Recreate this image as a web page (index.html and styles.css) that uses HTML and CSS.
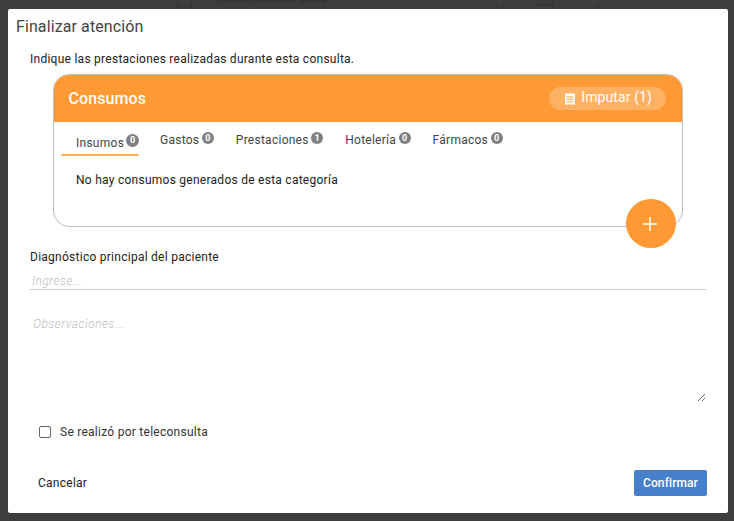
FILE: index.html
```html
<!DOCTYPE html>
<html lang="es">
<head>
  <meta charset="UTF-8">
  <title>Finalizar atención</title>
  <link rel="stylesheet" href="styles.css">
</head>
<body>
  <div class="backdrop-strip">
    <span class="backdrop-box"></span>
    <span class="backdrop-date">Lunes, 8 Junio 2020</span>
    <svg class="backdrop-nav" width="100" height="9" viewBox="0 0 100 9">
      <path d="M0 0l5 4M94 4l5-4" stroke="#4f4f4f" stroke-width="1" fill="none"/>
      <path d="M40.500-2v7h15v-7" stroke="#333" stroke-width="1" fill="none"/>
    </svg>
  </div>

  <div class="modal">
    <h2 class="modal-title">Finalizar atención</h2>
    <p class="modal-intro">Indique las prestaciones realizadas durante esta consulta.</p>

    <div class="card">
      <div class="card-head">
        <span class="card-title">Consumos</span>
        <button class="impute-btn">
          <svg class="impute-icon" width="10" height="12" viewBox="0 0 10 12">
            <path d="M0 0l1.250 1 1.250-1 1.250 1 1.250-1 1.250 1 1.250-1 1.250 1 1.250-1v12l-1.250-1-1.250 1-1.250-1-1.250 1-1.250-1-1.250 1-1.250-1-1.250 1z" fill="#fff"/>
            <path d="M1.500 3h7v1.500h-7zM1.500 5.500h7v1.500h-7zM1.500 8h7v1.500h-7z" fill="#ffb163" fill-opacity=".75"/>
          </svg>
          Imputar (1)
        </button>
      </div>

      <div class="tabs">
        <div class="tab tab-active">Insumos<span class="badge">0</span></div>
        <div class="tab">Gastos<span class="badge">0</span></div>
        <div class="tab">Prestaciones<span class="badge">1</span></div>
        <div class="tab">Hotelería<span class="badge">0</span></div>
        <div class="tab">Fármacos<span class="badge">0</span></div>
      </div>

      <p class="empty-msg">No hay consumos generados de esta categoría</p>

      <button class="fab">
        <svg width="14" height="14" viewBox="0 0 14 14">
          <path d="M7 0v14M0 7h14" stroke="#fff" stroke-width="1.4"/>
        </svg>
      </button>
    </div>

    <label class="field-label">Diagnóstico principal del paciente</label>
    <input class="field-input" type="text" placeholder="Ingrese...">
    <textarea class="field-notes" placeholder="Observaciones..."></textarea>

    <label class="check-row">
      <span class="check-box"></span>
      Se realizó por teleconsulta
    </label>

    <div class="modal-foot">
      <button class="btn-cancel">Cancelar</button>
      <button class="btn-confirm">Confirmar</button>
    </div>
  </div>
</body>
</html>
```

FILE: styles.css
```css
* {
  box-sizing: border-box;
}
html, body {
  height: 100%;
}
body {
  margin: 0;
  overflow: hidden;
  background-color: #3d3d3d;
  font-family: Roboto, "Liberation Sans", sans-serif;
  font-size: 12px;
  letter-spacing: .26px;
  color: #222;
}
button {
  font-family: inherit;
  letter-spacing: inherit;
  border: none;
  cursor: pointer;
}
.backdrop-strip {
  display: flex;
  align-items: flex-start;
  height: 9px;
  overflow: hidden;
  padding-left: 177px;
}
.backdrop-box {
  width: 15px;
  height: 7px;
  border: 1px solid #333;
  border-top: none;
}
.backdrop-date {
  width: 106px;
  margin: -9px 0 0 25px;
  font-size: 12px;
  line-height: 15px;
  letter-spacing: .2px;
  white-space: nowrap;
  color: #303030;
}
.backdrop-nav {
  margin-left: 174px;
  flex-shrink: 0;
}
.modal {
  width: 720px;
  height: 504px;
  margin-left: 8px;
  padding-top: 8px;
  background-color: #fff;
  border-radius: 2px;
}
.modal-title {
  margin: 0 0 0 8px;
  font-size: 16px;
  font-weight: 400;
  line-height: 19px;
  letter-spacing: .1px;
  color: #444;
}
.modal-intro {
  margin: 16px 0 0 22px;
  line-height: 14px;
}
.card {
  position: relative;
  width: 630px;
  height: 153px;
  margin: 8px 0 0 45px;
  border: 1px solid #bdbdbd;
  border-radius: 16px;
}
.card-head {
  display: flex;
  justify-content: space-between;
  align-items: center;
  height: 47px;
  padding: 0 16px 0 14.500px;
  background-color: #ff9933;
  border-radius: 15px 15px 0 0;
}
.card-title {
  font-size: 16px;
  font-weight: 500;
  letter-spacing: .1px;
  color: #fff;
}
.impute-btn {
  display: flex;
  align-items: center;
  gap: 6px;
  height: 23px;
  padding: 0 14px 3px 16px;
  background-color: #ffb163;
  border-radius: 12px;
  font-size: 14px;
  letter-spacing: .1px;
  color: #fff;
}
.impute-icon {
  margin-top: 4px;
}
.tabs {
  display: flex;
  gap: 22px;
  height: 34px;
  padding-left: 7px;
}
.tab {
  display: flex;
  align-items: flex-start;
  padding-top: 11px;
  line-height: 14px;
  color: #444;
}
.tab-active {
  width: 78px;
  height: 34px;
  margin-right: -1px;
  padding: 14px 0 0 15px;
  border-bottom: 2px solid #ffb35c;
  border-radius: 0 0 2px 2px;
}
.badge {
  width: 12px;
  height: 12px;
  margin-top: -1px;
  margin-left: 2.500px;
  background-color: #808080;
  border-radius: 50%;
  font-size: 9px;
  font-weight: 700;
  line-height: 12px;
  letter-spacing: 0;
  text-align: center;
  color: #fff;
}
.tab-active .badge {
  width: 13px;
  height: 13px;
  margin-left: 2px;
  margin-top: -2px;
  line-height: 13px;
}
.empty-msg {
  margin: 17px 0 0 22px;
  line-height: 14px;
}
.fab {
  position: absolute;
  right: 6px;
  bottom: -22px;
  display: flex;
  align-items: center;
  justify-content: center;
  width: 50px;
  height: 49px;
  padding: 0 2px 0 0;
  background-color: #ff9933;
  border-radius: 50%;
}
.field-label {
  display: block;
  margin: 23px 0 0 22px;
  line-height: 14px;
}
.field-input {
  display: block;
  width: 676px;
  height: 23px;
  margin: 3px 0 0 22px;
  padding: 5px 2px 0;
  border: none;
  border-bottom: 1px solid #ccc;
  outline: none;
  font-family: inherit;
  font-size: 12px;
  letter-spacing: .45px;
}
.field-input::placeholder, .field-notes::placeholder {
  font-style: italic;
  font-weight: 300;
  color: #bcbcbc;
}
.field-notes {
  display: block;
  width: 676px;
  height: 89px;
  margin: 23px 0 0 22px;
  padding: 4px 3px;
  border: none;
  outline: none;
  font-family: inherit;
  font-size: 12px;
  letter-spacing: .5px;
}
.check-row {
  display: flex;
  align-items: center;
  gap: 9px;
  margin: 23px 0 0 31px;
  line-height: 14px;
  color: #333;
}
.check-box {
  width: 12px;
  height: 12px;
  border: 1px solid #666;
  border-radius: 2px;
}
.modal-foot {
  display: flex;
  justify-content: space-between;
  align-items: center;
  margin: 31px 21px 0 30px;
}
.btn-cancel {
  padding: 0;
  background: none;
  font-size: 12px;
  color: #222;
}
.btn-confirm {
  width: 73px;
  height: 26px;
  padding: 0;
  background-color: #4680cb;
  border-radius: 2px;
  font-size: 12px;
  font-weight: 500;
  letter-spacing: .1px;
  color: #fff;
}
```
